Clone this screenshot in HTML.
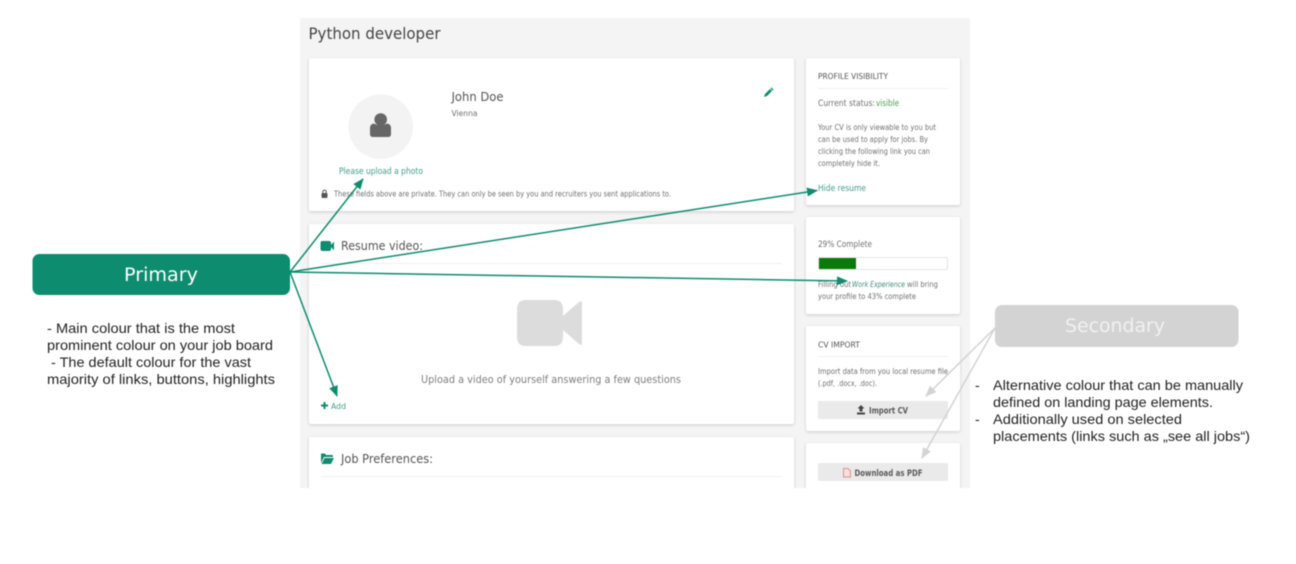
<!DOCTYPE html>
<html><head><meta charset="utf-8"><style>
html,body{margin:0;padding:0;background:#fff;width:1296px;height:564px;overflow:hidden}
svg{display:block;font-family:"Liberation Sans",sans-serif}
.ui{font-family:"DejaVu Sans",sans-serif}
.c{fill:#fff;filter:drop-shadow(0 1px 1.5px rgba(0,0,0,.16))}
.g{fill:#707070}
.d{fill:#555}
.l{fill:#3f9c85}
.hr{fill:#efefef}
.t{fill:#222;font-size:14px}
.ui .b{font-weight:bold}
</style></head><body>
<svg width="1296" height="564" viewBox="0 0 1296 564" xmlns="http://www.w3.org/2000/svg">
<defs>
<marker id="a" markerWidth="11" markerHeight="9" refX="10" refY="4.500" orient="auto" markerUnits="userSpaceOnUse"><path d="M0 0L11 4.500L0 9Z" fill="#0e8c6f"/></marker>
<marker id="b" markerWidth="11" markerHeight="9" refX="10" refY="4.500" orient="auto" markerUnits="userSpaceOnUse"><path d="M0 0L11 4.500L0 9Z" fill="#d3d3d3"/></marker>
<clipPath id="p"><rect x="300" y="18" width="670" height="470"/></clipPath>
</defs>
<g style="filter:blur(.4px)">
<rect x="300" y="18" width="670" height="470" fill="#f4f4f4"/>
<g clip-path="url(#p)">
<rect class="c" x="309" y="58" width="485" height="153" rx="2"/>
<rect class="c" x="309" y="224" width="485" height="200" rx="2"/>
<rect class="c" x="309" y="437" width="485" height="70" rx="2"/>
<rect class="c" x="806" y="58" width="154" height="147" rx="2"/>
<rect class="c" x="806" y="217" width="154" height="97" rx="2"/>
<rect class="c" x="806" y="326" width="154" height="105" rx="2"/>
<rect class="c" x="806" y="443" width="154" height="70" rx="2"/>
</g>
<g class="ui">
<text x="308.500" y="39" font-size="16" fill="#444" textLength="132" lengthAdjust="spacingAndGlyphs">Python developer</text>

<circle cx="380.700" cy="126.700" r="32.300" fill="#f3f3f3"/>
<circle cx="380.700" cy="119.500" r="6.300" fill="#666"/>
<path d="M370 134v-6q0-3.500 3.500-4.500q7 3.500 14 0q3.500 1 3.500 4.500v6q0 3-3 3h-15q-3 0-3-3z" fill="#666"/>
<text x="339" y="174" font-size="8.500" class="l" textLength="84" lengthAdjust="spacingAndGlyphs">Please upload a photo</text>
<text x="451.500" y="101" font-size="12.500" class="d" textLength="52" lengthAdjust="spacingAndGlyphs">John Doe</text>
<text x="451.500" y="116" font-size="8" class="g" textLength="26" lengthAdjust="spacingAndGlyphs">Vienna</text>
<path d="M764 97l1-3 5-5 2 2-5 5zM770.500 88.500l1-1 2 2-1 1z" fill="#0e8c6f"/>
<rect x="321.500" y="193" width="6" height="5" rx="1" fill="#555"/>
<path d="M322.800 193v-1.200a1.700 1.700 0 0 1 3.400 0v1.200" fill="none" stroke="#555" stroke-width="1"/>
<text x="334" y="196.500" font-size="7.500" class="g" textLength="337" lengthAdjust="spacingAndGlyphs">These fields above are private. They can only be seen by you and recruiters you sent applications to.</text>

<path d="M322.500 241h6.500q2 0 2 2v6q0 2-2 2h-6.500q-2 0-2-2v-6q0-2 2-2zM331 245l2.500-3h.500v8h-.500l-2.500-3z" fill="#0e8c6f"/>
<text x="341" y="250" font-size="12" class="d" textLength="82" lengthAdjust="spacingAndGlyphs">Resume video:</text>
<rect class="hr" x="321" y="263" width="461" height="1"/>
<path d="M526 300h28q9 0 9 9v28q0 9-9 9h-28q-9 0-9-9v-28q0-9 9-9z" fill="#dcdcdc"/>
<path d="M563 316l16-14q3-2 3 1v40q0 3-3 1l-16-14z" fill="#dcdcdc"/>
<text x="421" y="383" font-size="10.500" class="g" fill-opacity=".9" textLength="260" lengthAdjust="spacingAndGlyphs">Upload a video of yourself answering a few questions</text>
<path d="M323.500 402h2v2.500h2.500v2h-2.500v2.500h-2v-2.500h-2.500v-2h2.500z" fill="#0e8c6f"/>
<text x="331" y="409" font-size="8" class="l" textLength="15" lengthAdjust="spacingAndGlyphs">Add</text>

<path d="M321 454v9l3-6h9v-1q0-1-1-1h-6l-1-1.500h-4q0-.500 0 .500zM324.500 458l-3 6h9.500l3-6z" fill="#0e8c6f"/>
<text x="341" y="463" font-size="12" class="d" textLength="92" lengthAdjust="spacingAndGlyphs">Job Preferences:</text>
<rect class="hr" x="321" y="476" width="461" height="1"/>

<text x="818" y="79" font-size="8" class="d" textLength="70" lengthAdjust="spacingAndGlyphs">PROFILE VISIBILITY</text>
<rect class="hr" x="818" y="88" width="130" height="1"/>
<text x="818" y="106" font-size="8.500" class="g" textLength="57" lengthAdjust="spacingAndGlyphs">Current status:</text>
<text x="876" y="106" font-size="8.500" fill="#4c9a4c" textLength="23" lengthAdjust="spacingAndGlyphs">visible</text>
<g font-size="8" class="g">
<text x="818" y="130" textLength="118" lengthAdjust="spacingAndGlyphs">Your CV is only viewable to you but</text>
<text x="818" y="142" textLength="110" lengthAdjust="spacingAndGlyphs">can be used to apply for jobs. By</text>
<text x="818" y="154" textLength="112" lengthAdjust="spacingAndGlyphs">clicking the following link you can</text>
<text x="818" y="166" textLength="62" lengthAdjust="spacingAndGlyphs">completely hide it.</text>
</g>
<text x="818" y="191" font-size="8.500" class="l" textLength="48" lengthAdjust="spacingAndGlyphs">Hide resume</text>

<text x="818" y="247" font-size="8.500" class="g" textLength="54" lengthAdjust="spacingAndGlyphs">29% Complete</text>
<rect x="818.500" y="257.500" width="129" height="12" rx="1.500" fill="#fff" stroke="#e4e4e4"/>
<rect x="819" y="258" width="37" height="11" fill="#0a7a0a"/>
<text x="818" y="287" font-size="8" class="g" textLength="33" lengthAdjust="spacingAndGlyphs">Filling out</text>
<text x="852" y="287" font-size="8" font-style="italic" fill="#3f8f7a" textLength="53" lengthAdjust="spacingAndGlyphs">Work Experience</text>
<text x="907" y="287" font-size="8" class="g" textLength="31" lengthAdjust="spacingAndGlyphs">will bring</text>
<text x="818" y="299" font-size="8" class="g" textLength="98" lengthAdjust="spacingAndGlyphs">your profile to 43% complete</text>

<text x="818" y="347.500" font-size="8" class="d" textLength="42" lengthAdjust="spacingAndGlyphs">CV IMPORT</text>
<rect class="hr" x="818" y="356" width="130" height="1"/>
<text x="818" y="374" font-size="8" class="g" textLength="130" lengthAdjust="spacingAndGlyphs">Import data from you local resume file</text>
<text x="818" y="386" font-size="8" class="g" textLength="59" lengthAdjust="spacingAndGlyphs">(.pdf, .docx, .doc).</text>
<rect x="818" y="401" width="130" height="18" rx="1" fill="#eaeaea"/>
<path d="M861 405l3.500 3.500h-2v3h-3v-3h-2zM857 412.500h8v2h-8z" fill="#444"/>
<text x="869" y="413.500" font-size="8.500" class="b" fill="#5a5a5a" textLength="39" lengthAdjust="spacingAndGlyphs">Import CV</text>
<rect x="818" y="463" width="130" height="18" rx="1" fill="#eaeaea"/>
<path d="M843.500 468.500h4.500l2.500 2.500v6h-7z" fill="#f8dede" stroke="#e08f8f" stroke-width="1"/>
<text x="854.500" y="476" font-size="8.500" class="b" fill="#5a5a5a" textLength="68" lengthAdjust="spacingAndGlyphs">Download as PDF</text>
</g>

<g fill="none" stroke-width="1.500">
<g stroke="#0e8c6f">
<path d="M290 272L363 179" marker-end="url(#a)"/>
<path d="M290 272L817 190.500" marker-end="url(#a)"/>
<path d="M290 272L847 281" marker-end="url(#a)"/>
<path d="M290 272L337 396" marker-end="url(#a)"/>
</g>
<g stroke="#d3d3d3">
<path d="M995 328L926 396" marker-end="url(#b)"/>
<path d="M995 328L922 458" marker-end="url(#b)"/>
</g>
</g>

<rect x="32.500" y="254" width="257.500" height="41" rx="7" fill="#0e8c6f"/>
<text class="ui" x="124" y="281" font-size="18.500" fill="#fff" textLength="74" lengthAdjust="spacingAndGlyphs">Primary</text>
<rect x="995" y="305" width="243.500" height="42" rx="7" fill="#d3d3d3"/>
<text class="ui" x="1065" y="332" font-size="18.500" fill="#f1f1f1" textLength="100" lengthAdjust="spacingAndGlyphs">Secondary</text>

<text class="t" x="47" y="333" textLength="188" lengthAdjust="spacingAndGlyphs">- Main colour that is the most</text>
<text class="t" x="47" y="350" textLength="226" lengthAdjust="spacingAndGlyphs">prominent colour on your job board</text>
<text class="t" x="51" y="367" textLength="200" lengthAdjust="spacingAndGlyphs">- The default colour for the vast</text>
<text class="t" x="47" y="384" textLength="228" lengthAdjust="spacingAndGlyphs">majority of links, buttons, highlights</text>

<text class="t" x="975" y="390">-</text>
<text class="t" x="975" y="424">-</text>
<text class="t" x="993" y="390" textLength="250" lengthAdjust="spacingAndGlyphs">Alternative colour that can be manually</text>
<text class="t" x="993" y="407" textLength="220" lengthAdjust="spacingAndGlyphs">defined on landing page elements.</text>
<text class="t" x="993" y="424" textLength="189" lengthAdjust="spacingAndGlyphs">Additionally used on selected</text>
<text class="t" x="993" y="441" textLength="257" lengthAdjust="spacingAndGlyphs">placements (links such as „see all jobs“)</text>
</g>
</svg>
</body></html>
